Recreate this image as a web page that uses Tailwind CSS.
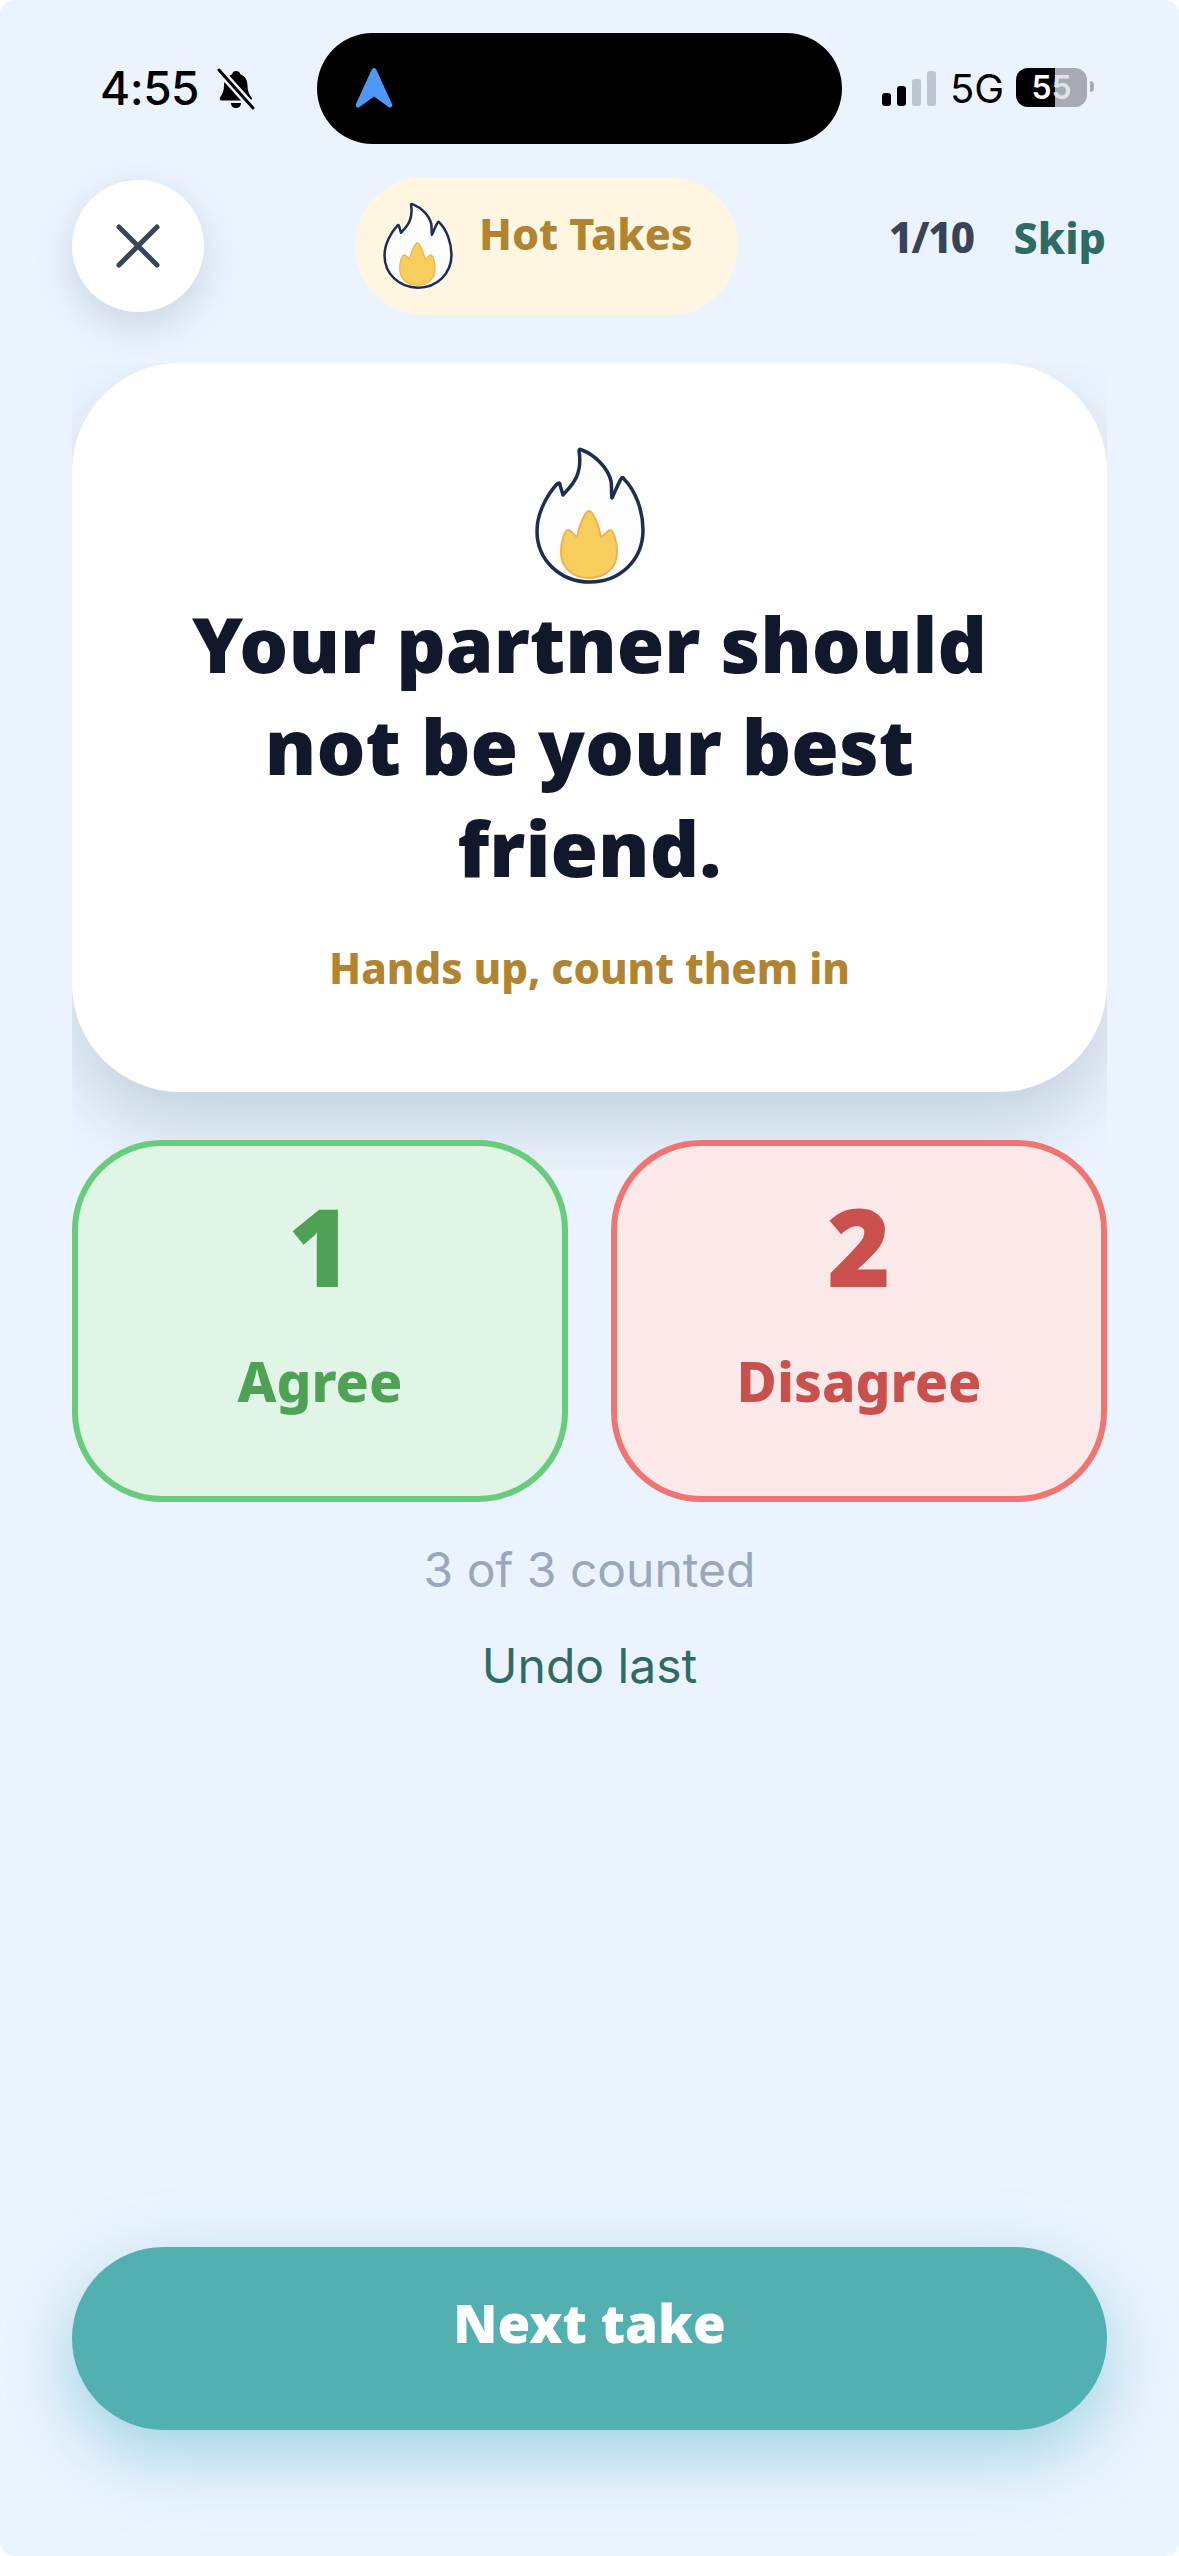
<!DOCTYPE html>
<html lang="en">
<head>
  <meta charset="UTF-8">
  <meta name="viewport" content="width=device-width, initial-scale=1.0">
  <title>Hot Takes</title>
  <script src="https://cdn.jsdelivr.net/npm/@tailwindcss/browser@4"></script>
</head>
<body class="bg-white">
  <div class="w-[1179px] h-[2556px] rounded-[14px] overflow-hidden bg-[#ebf4fe] flex flex-col [font-family:'Noto_Sans',sans-serif]">

    <!-- Status bar -->
    <div class="h-[177px] shrink-0 flex items-start pt-[33px] pl-[100px] text-black [font-family:Inter,sans-serif]">
      <div class="h-[111px] w-[217px] flex items-center">
        <span class="text-[46px] font-medium leading-none tracking-[-0.5px] w-[121px] pb-[2px]">4:55</span>
        <svg class="w-[38px] h-[42px] -ml-[4px]" viewBox="0 0 38 42">
          <path d="M19 3c2 0 4 1 4.500 3.500 5 1.500 7 6 7 11 0 5 1.500 9 4 12 1 1.500 0 3-1.500 3H5c-2 0-3-1.500-2-3 2.500-3 4-7 4-12 0-5 3-9.500 8-11C15.500 4 17 3 19 3zM14 35h10c0 3-2 5-5 5s-5-2-5-5z" fill="#000"/>
          <path d="M2 2l34 38" stroke="#ebf4fe" stroke-width="8"/>
          <path d="M2 2l34 38" stroke="#000" stroke-width="3" stroke-linecap="round"/>
        </svg>
      </div>
      <!-- Dynamic island with navigation arrow -->
      <div class="w-[525px] h-[111px] rounded-full bg-black flex items-center pl-[38px] pb-[2px]">
        <svg class="w-[38px] h-[42px]" viewBox="0 0 38 42">
          <path d="M19 1c1.500 0 2 1 2.500 2L37 37c1 2.500-1 4.500-3.500 3L19 29.500 4.500 40C2 41.500 0 39.500 1 37L16.500 3C17 2 17.500 1 19 1z" fill="#4f97f7"/>
        </svg>
      </div>
      <!-- Signal, network and battery -->
      <div class="h-[111px] flex items-center pl-[40px]">
        <div class="flex items-end gap-[6px] h-[35px] mt-[-1px]">
          <span class="w-[9px] h-[13px] rounded-[3px] bg-black"></span>
          <span class="w-[9px] h-[20px] rounded-[3px] bg-black"></span>
          <span class="w-[9px] h-[27px] rounded-[3px] bg-[#bdc5cf]"></span>
          <span class="w-[9px] h-[35px] rounded-[3px] bg-[#bdc5cf]"></span>
        </div>
        <span class="ml-[14px] text-[40px] leading-none w-[66px]">5G</span>
        <div class="relative w-[71px] h-[39px] rounded-[12px] overflow-hidden bg-[#a6aab2] flex items-center justify-center mt-[-2px]">
          <span class="absolute left-0 top-0 bottom-0 w-[39px] bg-black"></span>
          <span class="relative text-[32px] font-semibold leading-none text-white">5<span class="text-[#dfe3ea]">5</span></span>
        </div>
        <span class="w-[4px] h-[11px] ml-[3px] rounded-r-full bg-[#a6aab2] mt-[-4px]"></span>
      </div>
    </div>

    <!-- Top row: close, category pill, progress, skip -->
    <div class="h-[138px] shrink-0 flex items-center pl-[72px] pr-[73px]">
      <button class="w-[132px] h-[132px] shrink-0 rounded-full bg-white flex items-center justify-center shadow-[0_14px_40px_rgba(30,50,90,0.16)]">
        <svg class="w-[44px] h-[44px]" viewBox="0 0 44 44" fill="none" stroke="#384457" stroke-width="5" stroke-linecap="round">
          <path d="M3 3l38 38M41 3L3 41"/>
        </svg>
      </button>
      <div class="ml-[151px] w-[383px] h-[138px] rounded-full bg-[#fef6e0] flex items-start pl-[27px]">
        <svg class="w-[72px] h-[90px] mt-[24px] shrink-0" viewBox="-2 -2 114 140">
          <path d="M44 3C44 1 45 1 47 2C60 7 73 20 76 33C77 38 76 45 77 50C80 44 83 36 86 31C87 29 88 29 89 31C100 42 108 62 108 82C108 112 85 134 55 134C25 134 2 112 2 83C2 65 12 47 22 36C24 34 25 35 25 37L28 47C36 38 48 28 44 3Z" fill="#fdfdfe" stroke="#1c2f52" stroke-width="4" stroke-linejoin="round"/>
          <path d="M54 63C58 63 64 78 66 89C70 87 73 82 75 82C78 82 82 92 82 104C82 120 70 130 54 130C38 130 26 120 26 104C26 92 30 82 33 82C36 82 39 87 42 89C44 78 50 63 54 63Z" fill="#f7cd5d" stroke="#efb24f" stroke-width="2"/>
        </svg>
        <span class="ml-[25px] mt-[31px] text-[43px] leading-[52px] font-extrabold text-[#b08430] whitespace-nowrap">Hot Takes</span>
      </div>
      <span class="ml-auto mb-[18px] text-[42px] font-extrabold tracking-[-1.5px] text-[#374357] leading-none">1/10</span>
      <span class="ml-[40px] mb-[18px] text-[43px] font-extrabold text-[#2f6b66] leading-none">Skip</span>
    </div>

    <!-- Question card; its shadow stops at the column edges -->
    <div class="mt-[48px] mx-[72px] pb-[78px] -mb-[30px] overflow-hidden shrink-0">
      <div class="h-[729px] rounded-[108px] bg-white flex flex-col items-center pt-[85px] shadow-[0_34px_70px_rgba(30,50,90,0.18)]">
        <svg class="w-[114px] h-[140px] shrink-0 -mt-[2px]" viewBox="-2 -2 114 140">
          <path d="M44 3C44 1 45 1 47 2C60 7 73 20 76 33C77 38 76 45 77 50C80 44 83 36 86 31C87 29 88 29 89 31C100 42 108 62 108 82C108 112 85 134 55 134C25 134 2 112 2 83C2 65 12 47 22 36C24 34 25 35 25 37L28 47C36 38 48 28 44 3Z" fill="#fdfdfe" stroke="#1c2f52" stroke-width="3.500" stroke-linejoin="round"/>
          <path d="M54 63C58 63 64 78 66 89C70 87 73 82 75 82C78 82 82 92 82 104C82 120 70 130 54 130C38 130 26 120 26 104C26 92 30 82 33 82C36 82 39 87 42 89C44 78 50 63 54 63Z" fill="#f7cd5d" stroke="#efb24f" stroke-width="2"/>
        </svg>
        <h1 class="mt-[7px] w-[900px] text-center text-[77px] leading-[102px] font-black text-[#11182b]">Your partner should<br>not be your best<br>friend.</h1>
        <p class="mt-[41px] text-[42px] leading-[56px] font-extrabold text-[#b08430]">Hands up, count them in</p>
      </div>
    </div>

    <!-- Answer tiles -->
    <div class="relative mx-[72px] grid grid-cols-2 gap-[43px] shrink-0">
      <div class="h-[362px] rounded-[90px] border-[6px] border-[#69cb7c] bg-[#e1f5e6] flex flex-col items-center text-[#4ea155]">
        <span class="mt-[35px] text-[108px] leading-[130px] font-black">1</span>
        <span class="mt-[38px] text-[55px] leading-[64px] font-extrabold">Agree</span>
      </div>
      <div class="h-[362px] rounded-[90px] border-[6px] border-[#f07572] bg-[#fbe9e9] flex flex-col items-center text-[#c9504c]">
        <span class="mt-[35px] text-[108px] leading-[130px] font-black">2</span>
        <span class="mt-[38px] text-[55px] leading-[64px] font-extrabold">Disagree</span>
      </div>
    </div>

    <p class="mt-[38px] text-center text-[48px] leading-[60px] text-[#9aa6bc] [font-family:Inter,sans-serif]">3 of 3 counted</p>
    <p class="mt-[36px] text-center text-[48px] leading-[60px] text-[#2f6b66] [font-family:Inter,sans-serif]">Undo last</p>

    <!-- Primary action -->
    <div class="mt-auto mx-[72px] mb-[126px] shrink-0">
      <button class="w-full h-[183px] rounded-full bg-[#53b0b0] pb-[32px] text-[53px] font-black text-white shadow-[0_24px_70px_rgba(83,176,200,0.5)]">Next take</button>
    </div>
  </div>
</body>
</html>
